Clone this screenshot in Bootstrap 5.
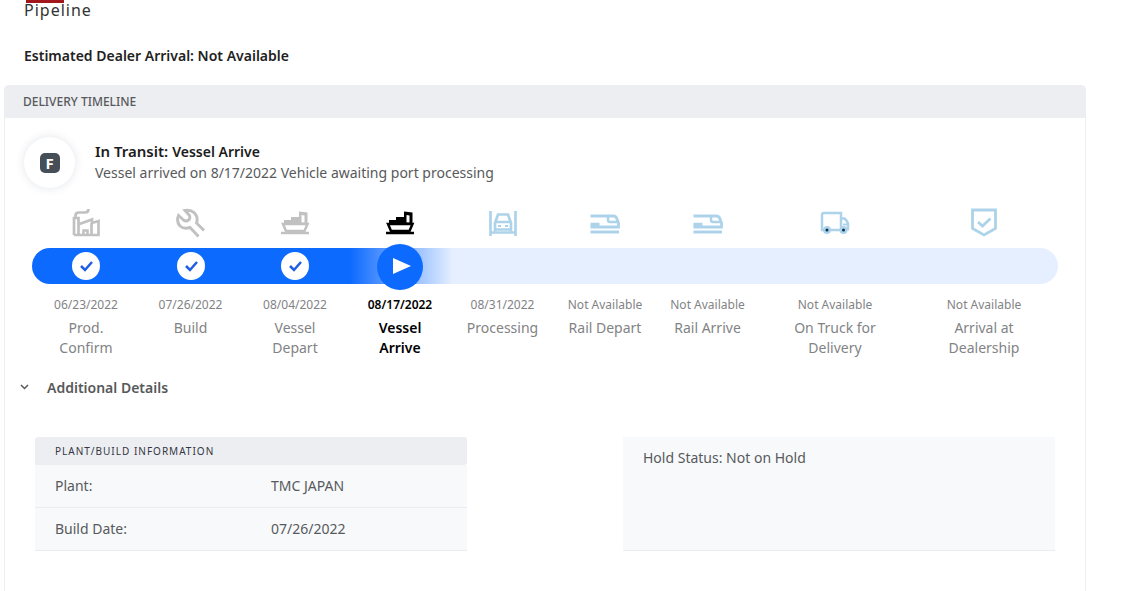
<!DOCTYPE html>
<html lang="en">
<head>
<meta charset="utf-8">
<meta name="viewport" content="width=device-width, initial-scale=1">
<title>Pipeline</title>
<link href="https://cdn.jsdelivr.net/npm/bootstrap@5.3.0/dist/css/bootstrap.min.css" rel="stylesheet">
<style>
body { font-family: "Noto Sans", "Open Sans", sans-serif; font-size: 14px; line-height: 20px; color: #58595b; background: #fff; }
.page { padding: 0 47px 0 4px; }
.tab-mark { width: 38px; height: 3px; margin-left: 22px; background: #a3161b; }
.page-title { font-size: 16px; line-height: 14px; letter-spacing: 1px; font-weight: 400; color: #333; padding-left: 20px; margin: 0 0 29px; }
.eta { font-size: 14px; line-height: 20px; font-weight: 600; color: #222; padding-left: 20px; margin: 0 0 19px; }
.panel { border: 1px solid #edeef2; border-bottom: 0; border-radius: 5px 5px 0 0; }
.panel-head { background: #edeef2; font-size: 12px; line-height: 32px; font-weight: 500; color: #58595b; padding-left: 18px; margin: 0; }
.status { padding: 19px 19px 0; gap: 20px; }
.status-mark { width: 51px; height: 51px; border-radius: 50%; box-shadow: 0 0 10px rgba(60, 70, 110, .14); }
.status-mark span { width: 20px; height: 20px; border-radius: 5px; background: #464e57; color: #fff; font-size: 15px; font-weight: 700; line-height: 20px; }
.status-title { font-size: 15px; line-height: 20px; font-weight: 600; color: #1c1c1c; margin: 4px 0 1px; }
.status-title span { font-size: 14px; }
.status-text { font-size: 14px; line-height: 20px; margin: 0; }
.timeline { margin: 15px 27px 0; }
.steps { display: grid; grid-template-columns: 104fr 105fr 104fr 106fr 99fr 106fr 99fr 156fr 142fr; padding: 0 3px 0 2px; margin: 0; list-style: none; text-align: center; justify-items: center; align-items: center; }
.glyphs { height: 40px; color: #add3ea; }
.glyphs svg { width: 32px; height: 32px; fill: none; stroke: currentColor; stroke-width: 3; display: block; }
.done { color: #c1c1c1; }
.now { color: #000; }
.track { height: 36px; border-radius: 18px; margin: 5px 0 9px; background: linear-gradient(90deg, #0d6aff 31%, #e5efff 41%); }
.tick { width: 28px; height: 28px; border-radius: 50%; background: #fff; color: #1d5fe0; }
.tick svg { width: 28px; height: 28px; display: block; }
.play { width: 46px; height: 46px; border-radius: 50%; background: #0d6aff; margin: -4px 0 -6px; }
.play svg { width: 46px; height: 46px; display: block; }
.labels { color: #828385; align-items: start; font-size: 14px; line-height: 20px; }
.labels time, .labels .when { display: block; font-size: 12px; line-height: 24px; margin-bottom: 1px; white-space: nowrap; }
.labels .now { font-weight: 600; }
.more { margin: 20px 0 39px 14px; gap: 16px; border: 0; padding: 0; background: none; font-size: 14px; line-height: 20px; font-weight: 600; color: #58595b; }
.more svg { width: 12px; height: 12px; fill: none; stroke: #58595b; stroke-width: 1.5; }
.facts { display: grid; grid-template-columns: 1fr 1fr; gap: 156px; padding: 0 30px 40px; }
.facts-head { background: #edeef2; border-radius: 3px 3px 3px 0; font-size: 10px; line-height: 28px; letter-spacing: 1px; font-weight: 400; color: #333643; padding-left: 20px; margin: 0; }
.facts-table { width: 100%; margin: 0; table-layout: fixed; border-collapse: separate; border-spacing: 0; }
.facts-table th, .facts-table td { height: 43px; padding: 0 0 0 20px; font-weight: 400; vertical-align: middle; background: #f7f9fb; border-bottom: 1px solid #e9ecf1; }
.facts-table th { width: 50%; }
.facts-table td { color: #58595b; }
.hold { background: #f7f9fb; border-bottom: 1px solid #e9ecf1; padding: 11px 20px; }
</style>
</head>
<body>
<svg class="d-none" aria-hidden="true">
  <symbol id="i-ship" viewBox="0 0 32 32"><path d="M2 26h28" stroke-width="2.500"/><path d="M4 17h24.500l-3 7H7z" stroke-width="2.500"/><path d="M5 17v-4h7v-3h8V4.500l8.500 1V18H5zM22.500 8v7.500h3V8.500z" fill="currentColor" fill-rule="evenodd" stroke="none"/></symbol>
  <symbol id="i-train" viewBox="0 0 32 32"><path d="M1.500 9h23q2.500 0 3.500 3l1.500 4v4h-28M1.500 25H30" stroke-width="2.800"/><path d="M1.500 17.500h9" stroke-width="3.500"/><path d="M19 10v3q0 2 2 2h7" stroke-width="2.500"/></symbol>
  <symbol id="i-check" viewBox="0 0 28 28"><path d="m9 14 4 4 7-8" fill="none" stroke="currentColor" stroke-width="2.500"/></symbol>
</svg>
<main class="page d-flex flex-column min-vh-100">
  <div class="tab-mark"></div>
  <h1 class="page-title">Pipeline</h1>
  <p class="eta">Estimated Dealer Arrival: Not Available</p>
  <section class="panel flex-grow-1">
    <h2 class="panel-head">DELIVERY TIMELINE</h2>
    <div class="status d-flex">
      <div class="status-mark d-flex align-items-center justify-content-center flex-shrink-0"><span class="text-center">F</span></div>
      <div>
        <h3 class="status-title">In Transit: <span>Vessel Arrive</span></h3>
        <p class="status-text">Vessel arrived on 8/17/2022 Vehicle awaiting port processing</p>
      </div>
    </div>
    <div class="timeline">
      <div class="steps glyphs" aria-hidden="true">
        <svg class="done" viewBox="0 0 32 32"><path d="M4 28V11h4.500v17M4 28h24.500V14l-6.500 2v-3.500L9.500 17M21.500 16v12M5.500 10V8.500q0-3 3.500-3h6q3.500 0 3.500-3.500" stroke-width="2.700"/><path d="M13.500 28v-4.500h4V28" stroke-width="2.500"/></svg>
        <svg class="done" viewBox="0 0 32 32"><path d="M29 23.500 21.500 16q2-5.500-2-10-4-3.500-9.500-2.500l4.500 5q1 3-1 4.500-2.500 2-5 0L3.500 8.500q-2.500 6 1.500 10.500 4 3.500 10 1.500L23.500 29.500" stroke-width="2.900"/></svg>
        <svg class="done"><use href="#i-ship"/></svg>
        <svg class="now"><use href="#i-ship"/></svg>
        <svg viewBox="0 0 32 32"><path d="M3.500 4v25M28.500 4v25M3 25.500h26" stroke-width="2.700"/><path d="M8 24.500V16l3-8.500h10l3 8.500v8.500M8 15h16M8 22.500h16" stroke-width="2.700"/><path d="M11 19h3M18 19h3" stroke-width="2"/></svg>
        <svg><use href="#i-train"/></svg>
        <svg><use href="#i-train"/></svg>
        <svg viewBox="0 0 32 32"><path d="M6 23H3V8q0-2 2-2h17v17H10M22 11.500h3.500q3.500 3 3.500 6v6" stroke-width="2.500"/><path d="M24 17.500h5" stroke-width="2"/><circle cx="8" cy="23" r="4" fill="currentColor" stroke="none"/><circle cx="24.500" cy="23" r="4" fill="currentColor" stroke="none"/><circle cx="8" cy="23" r="1.500" fill="#06334f" stroke="none"/><circle cx="24.500" cy="23" r="1.500" fill="#06334f" stroke="none"/></svg>
        <svg viewBox="0 0 32 32"><path d="M4.500 3h23v18.500L16 28 4.500 21.500zM10 15l4.500 4 8-7.500" stroke-width="2.800"/></svg>
      </div>
      <div class="steps track" aria-hidden="true">
        <span class="tick"><svg><use href="#i-check"/></svg></span>
        <span class="tick"><svg><use href="#i-check"/></svg></span>
        <span class="tick"><svg><use href="#i-check"/></svg></span>
        <span class="play"><svg viewBox="0 0 46 46"><path d="M16 14v16l18-8z" fill="#fff"/></svg></span>
      </div>
      <ol class="steps labels">
        <li><time>06/23/2022</time>Prod.<br>Confirm</li>
        <li><time>07/26/2022</time>Build</li>
        <li><time>08/04/2022</time>Vessel<br>Depart</li>
        <li class="now"><time>08/17/2022</time>Vessel<br>Arrive</li>
        <li><time>08/31/2022</time>Processing</li>
        <li><span class="when">Not Available</span>Rail Depart</li>
        <li><span class="when">Not Available</span>Rail Arrive</li>
        <li><span class="when">Not Available</span>On Truck for<br>Delivery</li>
        <li><span class="when">Not Available</span>Arrival at<br>Dealership</li>
      </ol>
    </div>
    <button class="more d-flex align-items-center" type="button" data-bs-toggle="collapse" data-bs-target="#details" aria-expanded="true" aria-controls="details">
      <svg viewBox="0 0 12 12" aria-hidden="true"><path d="m2 3 3.500 3.500L9 3"/></svg>Additional Details
    </button>
    <div class="collapse show" id="details">
      <div class="facts">
        <div>
          <h3 class="facts-head">PLANT/BUILD INFORMATION</h3>
          <table class="facts-table">
            <tbody>
              <tr><th scope="row">Plant:</th><td>TMC JAPAN</td></tr>
              <tr><th scope="row">Build Date:</th><td>07/26/2022</td></tr>
            </tbody>
          </table>
        </div>
        <div class="hold">Hold Status: Not on Hold</div>
      </div>
    </div>
  </section>
</main>
<script src="https://cdn.jsdelivr.net/npm/bootstrap@5.3.0/dist/js/bootstrap.bundle.min.js"></script>
</body>
</html>
